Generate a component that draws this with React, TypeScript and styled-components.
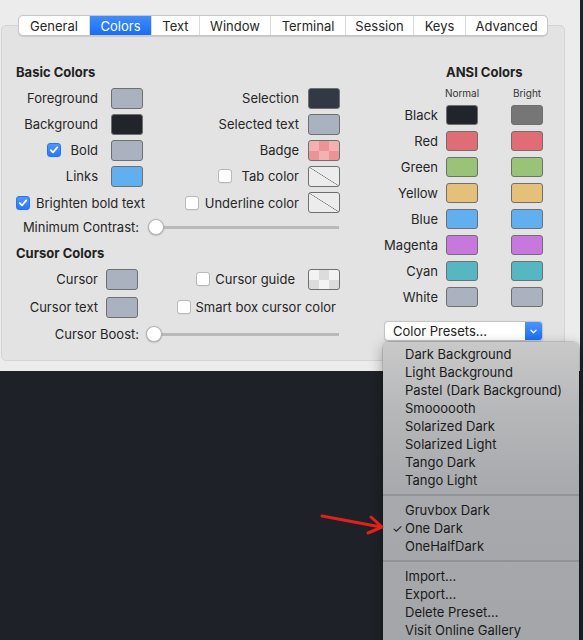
import React from "react";
import styled, { createGlobalStyle } from "styled-components";

const Global = createGlobalStyle`
  html, body { margin: 0; padding: 0; background: #1e2127; }
  body {
    font-family: Inter, "Noto Sans", "Liberation Sans", sans-serif;
    font-size: 13px;
    color: #262626;
    -webkit-font-smoothing: antialiased;
  }
`;

const Page = styled.div`
  position: relative;
  width: 583px;
  height: 640px;
  overflow: hidden;
  background: #1e2127;
`;

const Window = styled.div`
  width: 580px;
  height: 371px;
  box-sizing: border-box;
  padding: 15px 15px 0 1px;
  background: #ececec;
  display: flex;
  flex-direction: column;
`;

const TabBar = styled.div`
  position: relative;
  z-index: 1;
  align-self: center;
  display: flex;
  height: 21px;
  box-sizing: border-box;
  background: #fff;
  border: 1px solid #c6c6c6;
  border-radius: 5px;
  overflow: hidden;
  box-shadow: 0 0.5px 1px rgba(0, 0, 0, 0.12);
`;

const Tab = styled.div<{ $w: number; $active?: boolean }>`
  width: ${(p) => p.$w}px;
  box-sizing: border-box;
  display: flex;
  align-items: center;
  justify-content: center;
  font-size: 13px;
  color: ${(p) => (p.$active ? "#fff" : "#262626")};
  background: ${(p) => (p.$active ? "linear-gradient(#3f8ef8, #1b6cf4)" : "transparent")};
  & + & {
    border-left: 1px solid #dadada;
  }
`;

const Panel = styled.div`
  margin-top: -11px;
  height: 336px;
  box-sizing: border-box;
  background: #e3e3e3;
  border: 1px solid #d4d4d4;
  border-radius: 5px;
  display: flex;
  gap: 44px;
  padding-left: 14px;
`;

const LeftColumn = styled.div`
  width: 324px;
  display: flex;
  flex-direction: column;
`;

const RightColumn = styled.div`
  width: 159px;
  display: flex;
  flex-direction: column;
`;

const SectionTitle = styled.div<{ $mt: number; $ml?: number }>`
  margin-top: ${(p) => p.$mt}px;
  margin-left: ${(p) => p.$ml ?? 0}px;
  height: 16px;
  line-height: 16px;
  font-size: 13px;
  font-weight: 700;
  color: #222;
`;

const FormGrid = styled.div<{ $cols: string; $rows: string; $mt: number }>`
  display: grid;
  grid-template-columns: ${(p) => p.$cols};
  grid-template-rows: ${(p) => p.$rows};
  margin-top: ${(p) => p.$mt}px;
`;

const Cell = styled.div<{ $pr?: number; $span?: number; $start?: boolean; $top?: boolean }>`
  display: flex;
  align-items: ${(p) => (p.$top ? "flex-start" : "center")};
  justify-content: ${(p) => (p.$start ? "flex-start" : "flex-end")};
  padding-right: ${(p) => p.$pr ?? 0}px;
  grid-column: span ${(p) => p.$span ?? 1};
  white-space: nowrap;
  min-width: 0;
`;

const SwatchCell = styled.div`
  display: flex;
  align-items: center;
`;

const Swatch = styled.div<{ $bg: string; $h?: number }>`
  width: 32px;
  height: ${(p) => p.$h ?? 21}px;
  box-sizing: border-box;
  border: 1px solid #6f6f6f;
  border-radius: 3px;
  background: ${(p) => p.$bg};
`;

const CheckLabel = styled.label<{ $gap: number }>`
  display: inline-flex;
  align-items: center;
  gap: ${(p) => p.$gap}px;
  white-space: nowrap;
`;

const Box = styled.span<{ $on?: boolean }>`
  flex: none;
  width: 14px;
  height: 14px;
  box-sizing: border-box;
  border-radius: 3px;
  display: inline-flex;
  align-items: center;
  justify-content: center;
  background: ${(p) => (p.$on ? "linear-gradient(#4c98f8, #2a77f5)" : "#fff")};
  border: 1px solid ${(p) => (p.$on ? "#2a74ea" : "#b8b8b8")};
  box-shadow: 0 0.5px 0.5px rgba(0, 0, 0, 0.08);
`;

const SliderRow = styled.div<{ $h: number; $gap: number }>`
  height: ${(p) => p.$h}px;
  display: flex;
  align-items: center;
  gap: ${(p) => p.$gap}px;
`;

const SliderLabel = styled.div`
  width: 123px;
  text-align: right;
  white-space: nowrap;
`;

const Track = styled.div`
  flex: 1;
  height: 16px;
  display: flex;
  align-items: center;
  background: linear-gradient(#b9b9b9, #b9b9b9) no-repeat 8px center / calc(100% - 9px) 3px;
`;

const Knob = styled.span`
  width: 16px;
  height: 16px;
  box-sizing: border-box;
  border-radius: 50%;
  background: #fff;
  border: 0.5px solid #b3b3b3;
  box-shadow: 0 0.5px 1.5px rgba(0, 0, 0, 0.28);
`;

const HeadLabel = styled.div`
  width: 32px;
  display: flex;
  justify-content: center;
  font-size: 10px;
  line-height: 12px;
  color: #333;
  white-space: nowrap;
`;

const Popup = styled.div`
  margin-top: 11px;
  width: 159px;
  height: 20px;
  box-sizing: border-box;
  display: flex;
  background: #fff;
  border: 1px solid #c4c4c4;
  border-radius: 4px;
  overflow: hidden;
  box-shadow: 0 0.5px 1px rgba(0, 0, 0, 0.12);
`;

const PopupText = styled.div`
  flex: 1;
  padding-left: 8px;
  display: flex;
  align-items: center;
  font-size: 13px;
  color: #222;
`;

const PopupArrow = styled.div`
  width: 17px;
  display: flex;
  align-items: center;
  justify-content: center;
  background: linear-gradient(#4a95f8, #1d6ef5);
`;

const Menu = styled.div`
  position: absolute;
  left: 383px;
  top: 342px;
  width: 196px;
  height: 320px;
  box-sizing: border-box;
  padding-top: 3px;
  border-radius: 5px;
  background: linear-gradient(180deg, #c9c9c9 0px, #b6b7b9 70px, #a7a9ac 150px, #a3a5a8 100%);
  box-shadow: 0 0 0 0.5px rgba(0, 0, 0, 0.22), 0 4px 14px rgba(0, 0, 0, 0.35);
`;

const MenuItem = styled.div`
  height: 18px;
  display: flex;
  align-items: center;
  padding-left: 9px;
  font-size: 13px;
  color: #1a1a1a;
  white-space: nowrap;
`;

const CheckCol = styled.span`
  width: 13px;
  font-size: 12px;
`;

const Separator = styled.div`
  height: 12px;
  display: flex;
  align-items: center;
  &::after {
    content: "";
    flex: 1;
    height: 2px;
    background: rgba(0, 0, 0, 0.12);
  }
`;

const Arrow = styled.svg`
  position: absolute;
  left: 310px;
  top: 505px;
`;

const Check = ({ on, gap, children }: { on?: boolean; gap: number; children: React.ReactNode }) => (
  <CheckLabel $gap={gap}>
    <Box $on={on}>
      {on && (
        <svg width="10" height="10" viewBox="0 0 10 10">
          <path d="M1.8 5.2 L4 7.4 L8.3 2.4" fill="none" stroke="#fff" strokeWidth="1.7" strokeLinecap="round" strokeLinejoin="round" />
        </svg>
      )}
    </Box>
    <span>{children}</span>
  </CheckLabel>
);

const diag = "linear-gradient(to top right, #ececec calc(50% - 0.6px), #777 50%, #ececec calc(50% + 0.6px))";
const pinkChecker = "repeating-conic-gradient(#e99595 0 25%, #f4b1b1 0 50%) 0 0 / 20px 20px";
const greyChecker = "repeating-conic-gradient(#dcdcdc 0 25%, #f3f3f3 0 50%) 0 0 / 20px 20px";

const tabs = [
  { name: "General", w: 70 },
  { name: "Colors", w: 62, active: true },
  { name: "Text", w: 48 },
  { name: "Window", w: 71 },
  { name: "Terminal", w: 75 },
  { name: "Session", w: 68 },
  { name: "Keys", w: 52 },
  { name: "Advanced", w: 82 },
];

const ansi = [
  { name: "Black", n: "#21252b", b: "#767676" },
  { name: "Red", n: "#e06c75", b: "#e06c75" },
  { name: "Green", n: "#98c379", b: "#98c379" },
  { name: "Yellow", n: "#e5c07b", b: "#e5c07b" },
  { name: "Blue", n: "#61afef", b: "#61afef" },
  { name: "Magenta", n: "#c678dd", b: "#c678dd" },
  { name: "Cyan", n: "#56b6c2", b: "#56b6c2" },
  { name: "White", n: "#abb2bf", b: "#abb2bf" },
];

const menuGroups: { name: string; checked?: boolean }[][] = [
  [
    { name: "Dark Background" },
    { name: "Light Background" },
    { name: "Pastel (Dark Background)" },
    { name: "Smoooooth" },
    { name: "Solarized Dark" },
    { name: "Solarized Light" },
    { name: "Tango Dark" },
    { name: "Tango Light" },
  ],
  [{ name: "Gruvbox Dark" }, { name: "One Dark", checked: true }, { name: "OneHalfDark" }],
  [{ name: "Import..." }, { name: "Export..." }, { name: "Delete Preset..." }, { name: "Visit Online Gallery" }],
];

export default function App() {
  return (
    <Page>
      <Global />
      <Window>
        <TabBar>
          {tabs.map((t) => (
            <Tab key={t.name} $w={t.w} $active={t.active}>
              {t.name}
            </Tab>
          ))}
        </TabBar>
        <Panel>
          <LeftColumn>
            <SectionTitle $mt={38}>Basic Colors</SectionTitle>
            <FormGrid $cols="95px 32px 165px 32px" $rows="26px 26px 26px 26px 27px" $mt={5}>
              <Cell $pr={13}>Foreground</Cell>
              <SwatchCell><Swatch $bg="#abb2bf" /></SwatchCell>
              <Cell $pr={9}>Selection</Cell>
              <SwatchCell><Swatch $bg="#323844" /></SwatchCell>

              <Cell $pr={13}>Background</Cell>
              <SwatchCell><Swatch $bg="#21252b" /></SwatchCell>
              <Cell $pr={9}>Selected text</Cell>
              <SwatchCell><Swatch $bg="#abb2bf" /></SwatchCell>

              <Cell $pr={13}><Check on gap={10}>Bold</Check></Cell>
              <SwatchCell><Swatch $bg="#abb2bf" /></SwatchCell>
              <Cell $pr={9}>Badge</Cell>
              <SwatchCell><Swatch $bg={pinkChecker} /></SwatchCell>

              <Cell $pr={13}>Links</Cell>
              <SwatchCell><Swatch $bg="#61afef" /></SwatchCell>
              <Cell $pr={9}><Check gap={10}>Tab color</Check></Cell>
              <SwatchCell><Swatch $bg={diag} /></SwatchCell>

              <Cell $span={2} $start><Check on gap={6}>Brighten bold text</Check></Cell>
              <Cell $pr={9}><Check gap={6}>Underline color</Check></Cell>
              <SwatchCell><Swatch $bg={diag} /></SwatchCell>
            </FormGrid>
            <SliderRow $h={22} $gap={9}>
              <SliderLabel>Minimum Contrast:</SliderLabel>
              <Track><Knob /></Track>
            </SliderRow>

            <SectionTitle $mt={7}>Cursor Colors</SectionTitle>
            <FormGrid $cols="90px 32px 170px 32px" $rows="28px 28px" $mt={4}>
              <Cell $pr={8}>Cursor</Cell>
              <SwatchCell><Swatch $bg="#abb2bf" /></SwatchCell>
              <Cell $pr={13}><Check gap={5}>Cursor guide</Check></Cell>
              <SwatchCell><Swatch $bg={greyChecker} /></SwatchCell>

              <Cell $pr={8}>Cursor text</Cell>
              <SwatchCell><Swatch $bg="#abb2bf" /></SwatchCell>
              <Cell $span={2} $pr={4}><Check gap={4}>Smart box cursor color</Check></Cell>
            </FormGrid>
            <SliderRow $h={26} $gap={7}>
              <SliderLabel>Cursor Boost:</SliderLabel>
              <Track><Knob /></Track>
            </SliderRow>
          </LeftColumn>

          <RightColumn>
            <SectionTitle $mt={38} $ml={62}>ANSI Colors</SectionTitle>
            <FormGrid $cols="62px 65px 32px" $rows="15px repeat(8, 26px)" $mt={7}>
              <Cell />
              <Cell $start $top><HeadLabel>Normal</HeadLabel></Cell>
              <Cell $start $top><HeadLabel>Bright</HeadLabel></Cell>
              {ansi.map((a) => (
                <React.Fragment key={a.name}>
                  <Cell $pr={8}>{a.name}</Cell>
                  <SwatchCell><Swatch $bg={a.n} $h={20} /></SwatchCell>
                  <SwatchCell><Swatch $bg={a.b} $h={20} /></SwatchCell>
                </React.Fragment>
              ))}
            </FormGrid>
            <Popup>
              <PopupText>Color Presets...</PopupText>
              <PopupArrow>
                <svg width="9" height="9" viewBox="0 0 9 9">
                  <path d="M2 3.3 L4.5 5.8 L7 3.3" fill="none" stroke="#fff" strokeWidth="1.4" strokeLinecap="round" strokeLinejoin="round" />
                </svg>
              </PopupArrow>
            </Popup>
          </RightColumn>
        </Panel>
      </Window>

      <Menu>
        {menuGroups.map((g, gi) => (
          <React.Fragment key={gi}>
            {gi > 0 && <Separator />}
            {g.map((it) => (
              <MenuItem key={it.name}>
                <CheckCol>{it.checked ? "✓" : ""}</CheckCol>
                {it.name}
              </MenuItem>
            ))}
          </React.Fragment>
        ))}
      </Menu>

      <Arrow width="80" height="35" viewBox="0 0 80 35">
        <path d="M12 11 L71 22" fill="none" stroke="#e3211c" strokeWidth="3" strokeLinecap="round" />
        <path d="M61 12 L72 22 L58 28" fill="none" stroke="#e3211c" strokeWidth="3" strokeLinecap="round" strokeLinejoin="round" />
      </Arrow>
    </Page>
  );
}
